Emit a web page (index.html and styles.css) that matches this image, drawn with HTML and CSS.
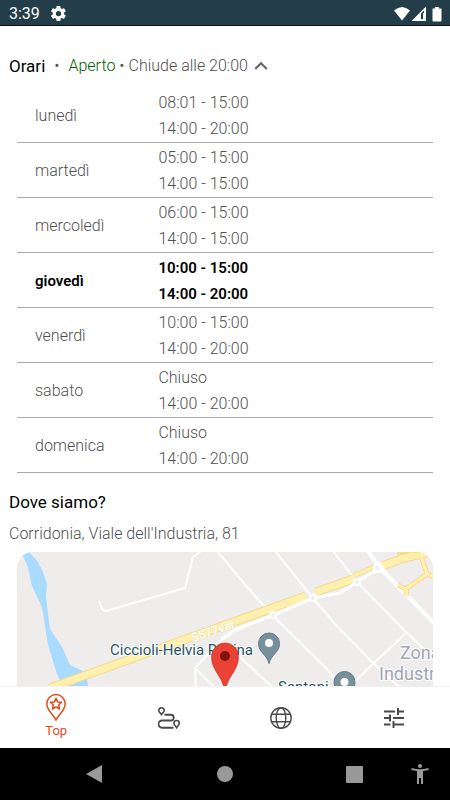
FILE: index.html
```html
<!DOCTYPE html>
<html lang="it">
<head>
<meta charset="utf-8">
<meta name="viewport" content="width=device-width, initial-scale=1">
<title>Orari e posizione</title>
<link rel="stylesheet" href="styles.css">
</head>
<body>
<header class="status">
  <span>3:39</span>
  <svg class="gear" width="15" height="15" viewBox="2 2 20 20"><path fill="#fff" fill-rule="evenodd" d="M19.4 13a7.500 7.500 0 0 0 0-2l2.100-1.600c.2-.2.2-.4.1-.6l-2-3.500c-.1-.2-.4-.3-.6-.2l-2.500 1a7.300 7.300 0 0 0-1.700-1l-.4-2.700a.5.5 0 0 0-.5-.4h-4a.5.5 0 0 0-.5.4L9 5.100a7.700 7.700 0 0 0-1.700 1l-2.500-1c-.2-.1-.5 0-.6.2l-2 3.500c-.1.2-.1.5.1.6L4.500 11a8 8 0 0 0 0 2l-2.200 1.600c-.2.2-.2.4-.1.6l2 3.500c.1.2.4.3.6.2l2.500-1c.5.4 1.100.7 1.700 1l.4 2.700c0 .2.2.4.5.4h4c.3 0 .5-.2.5-.4l.4-2.700a7.300 7.300 0 0 0 1.700-1l2.500 1c.2.1.5 0 .6-.2l2-3.500c.1-.2.1-.5-.1-.6zM12 15.500a3.500 3.500 0 1 1 0-7 3.500 3.500 0 0 1 0 7z"/></svg>
  <svg class="signals" width="50" height="16" viewBox="0 0 50 16"><path fill="#fff" d="M0 4.500Q8-2.500 16 4.500L8 14.500z"/><path fill="#fff" fill-rule="evenodd" d="M17.500 15L32 .5V15zM27 7.500V13h3V4.500z"/><path fill="#fff" d="M29 7h1v6h-1zM41 1h4v1.500h2q.5 0 .5.600V14.500q0 1-1 1h-7q-1 0-1-1V3.100q0-.6.5-.6h2z"/></svg>
</header>

<main class="content">
  <button class="summary" type="button" aria-expanded="true" aria-controls="hours">
    <span class="title">Orari</span>
    <span class="dot wide">•</span>
    <span class="open">Aperto</span>
    <span class="dot">•</span>
    <span>Chiude alle 20:00</span>
    <svg class="chevron" width="14" height="10" viewBox="0 0 14 10"><path d="M1.200 8L7 2.200 12.800 8" fill="none" stroke="#666" stroke-width="2.200"/></svg>
  </button>

  <table class="hours" id="hours">
    <tbody>
      <tr><th scope="row">lunedì</th><td>08:01 - 15:00<br>14:00 - 20:00</td></tr>
      <tr><th scope="row">martedì</th><td>05:00 - 15:00<br>14:00 - 15:00</td></tr>
      <tr><th scope="row">mercoledì</th><td>06:00 - 15:00<br>14:00 - 15:00</td></tr>
      <tr class="today"><th scope="row">giovedì</th><td>10:00 - 15:00<br>14:00 - 20:00</td></tr>
      <tr><th scope="row">venerdì</th><td>10:00 - 15:00<br>14:00 - 20:00</td></tr>
      <tr><th scope="row">sabato</th><td>Chiuso<br>14:00 - 20:00</td></tr>
      <tr><th scope="row">domenica</th><td>Chiuso<br>14:00 - 20:00</td></tr>
    </tbody>
  </table>

  <h2 class="title where">Dove siamo?</h2>
  <p class="address">Corridonia, Viale dell'Industria, 81</p>

  <div class="map">
    <svg viewBox="17 552 416 134" preserveAspectRatio="xMidYMin slice" role="img" aria-label="Mappa">
      <path fill="#eeedec" d="M17 552h416v134H17z"/>
      <path fill="#a9daff" d="M22 554l7-2 9 10 5 10 4 12-1 12 1 10 3 23 12 18 8 18 13 6 4 8 1 7H63l-6-12-9-29-6-38-10-21-4-19z"/>
      <g fill="none" stroke="#fff" stroke-linejoin="round">
        <path stroke-width="2" d="M99 601l3 8 4 2 79-23 8-31 8-6M217 551l31 37 18 20M275 551l37 46 23 27 37 38 27 25M333 551l24 31 48 49 21 20M273 616l52 51 18 20M405 634l-32 30-24 23M224 637l-29 31 1 19M195 668l19 19M238 655l34 32"/>
        <path stroke-width="4" d="M368 551l12 17 54 55"/>
      </g>
      <g fill="none" stroke="#f3d991" stroke-width="9">
        <path d="M50 688L225 625 306 596M316 592l37-13M382 566l22-8 31-7"/>
        <path stroke-width="5" d="M353 576l21-9M421 556l6 18 7 3M427 574l-10 7-11 8-8-4M406 588l1 8M397 552h21"/>
      </g>
      <g fill="none" stroke="#fff0ad" stroke-width="7">
        <path d="M50 688L225 625 306 596M316 592l37-13M382 566l22-8 31-7"/>
        <path stroke-width="3" d="M353 576l21-9M421 556l6 18 7 3M427 574l-10 7-11 8-8-4M406 588l1 8"/>
        <path stroke="#ffe16a" stroke-width="2" d="M397 552h21"/>
      </g>
      <g fill="none" stroke="#fff" stroke-width="3" stroke-linejoin="round">
        <path d="M222 639l13-9 38-15 40-17 27-5 17-11 16-10 8-2M368 551l8 12-2 9 10-2-5-8"/>
        <g fill="#eeedec" stroke-width="2"><circle cx="273" cy="615" r="3"/><circle cx="313" cy="598" r="3"/><circle cx="357" cy="582" r="3"/><circle cx="377" cy="568" r="3"/></g>
      </g>
      <text class="road" transform="translate(193 642) rotate(-19)">SS77var</text>
      <text class="place" x="110" y="655">Ciccioli-Helvia Recina</text>
      <text class="place" x="278" y="692">Santoni</text>
      <text class="area" x="400" y="659">Zona</text>
      <text class="area" x="379" y="680">Industri</text>
      <g fill="#78909c" stroke="#607985"><path d="M269 663.500c-2-9-10.500-11-10.500-20a10.500 10.500 0 0 1 21 0c0 9-8.500 11-10.500 20z"/><path d="M344.500 702c-2-9-10.500-11-10.500-20a10.500 10.500 0 0 1 21 0c0 9-8.500 11-10.500 20z"/></g>
      <g fill="#fff"><circle cx="269" cy="643" r="4"/><circle cx="344.500" cy="682" r="4"/></g>
      <path fill="#ea4335" stroke="#c5221f" stroke-width=".6" d="M225 694c-1-18-13.500-22-13.500-37.500a13.500 13.500 0 0 1 27 0C238.500 672 226 676 225 694z"/>
      <circle cx="225" cy="656" r="5" fill="#811411"/>
    </svg>
  </div>
</main>

<nav class="tabs" aria-label="Sezioni">
  <a class="tab active" href="#top">
    <svg width="20" height="27" viewBox="0 0 20 27" fill="none" stroke="currentColor"><path stroke-width="1.500" d="M10 26C7 20 .8 16.500.8 9.800a9.200 9.200 0 0 1 18.400 0C19.200 16.500 13 20 10 26z"/><path stroke-width="1.500" stroke-linejoin="round" d="M10 4.200l1.600 3.700 4 .4-3 2.700.9 4-3.500-2.100L6.500 15l.9-4-3-2.700 4-.4z"/></svg>
    <span>Top</span>
  </a>
  <a class="tab" href="#percorsi" aria-label="Percorsi">
    <svg width="22" height="22" viewBox="0 0 22 22" fill="none" stroke="currentColor"><path stroke-width="1.600" d="M3.500 7.500C2.500 6 .8 5.300.8 3.500a2.700 2.700 0 0 1 5.400 0C6.200 5.300 4.500 6 3.500 7.500zM18.600 20.700c-1-2-2.700-2.700-2.700-4.500a2.700 2.700 0 0 1 5.400 0c0 1.800-1.700 2.500-2.700 4.500z"/><path stroke-width="1.900" d="M6.500 7.700H13q2.700 0 2.700 2.900T13 13.500H4a3.600 3.600 0 0 0 0 7.200h11.500"/></svg>
  </a>
  <a class="tab" href="#web" aria-label="Sito web">
    <svg width="22" height="22" viewBox="0 0 22 22" fill="none" stroke="currentColor" stroke-width="1.400"><circle cx="11" cy="11" r="10.200"/><ellipse cx="11" cy="11" rx="4.800" ry="10.200"/><path d="M1.700 7.300h18.600M1.700 14.700h18.600"/></svg>
  </a>
  <a class="tab" href="#filtri" aria-label="Filtri">
    <svg width="20" height="20" viewBox="0 0 20 20" fill="none" stroke="currentColor" stroke-width="2"><path d="M0 3.500h11M14 3.500h6M14 0v7M0 10h6M9 10h11M6 6.500v7M0 16.500h6.500M9.500 16.500H20M9.500 13v7"/></svg>
  </a>
</nav>

<footer class="system">
  <button type="button" aria-label="Indietro"><svg width="18" height="18" viewBox="0 0 18 18"><path d="M1 9L17 0v18z"/></svg></button>
  <button type="button" aria-label="Home"><svg width="18" height="18" viewBox="0 0 18 18"><circle cx="9" cy="9" r="8"/></svg></button>
  <button type="button" aria-label="Recenti"><svg width="18" height="18" viewBox="0 0 18 18"><rect x="1" y="1" width="17" height="17" rx="1"/></svg></button>
  <button type="button" aria-label="Accessibilità"><svg width="18" height="20" viewBox="0 0 18 20"><circle cx="9" cy="2" r="2"/><path d="M.5 4Q9 6.500 17.500 4v2L12 7v13h-2v-6H8v6H6V7L.5 6z"/></svg></button>
</footer>
</body>
</html>
```

FILE: styles.css
```css
* { box-sizing: border-box; }

body {
  margin: 0;
  height: 100vh;
  display: flex;
  flex-direction: column;
  background: #fff;
  color: #505050;
  font: 300 16px/26px Roboto, sans-serif;
}

button {
  border: 0;
  padding: 0;
  background: none;
  color: inherit;
  font: inherit;
}

svg { display: block; }

.status {
  flex: none;
  height: 26px;
  display: flex;
  align-items: center;
  padding: 2px 6px 0 9px;
  border-bottom: 1px solid #0c1114;
  background: #233d49;
  color: #fff;
  font-size: 16px;
  font-weight: 400;
}

.gear { margin-left: 11px; }
.signals { margin-left: auto; }

.content {
  flex: 1;
  min-height: 0;
  overflow: hidden;
  padding-top: 27px;
  display: flex;
  flex-direction: column;
}

.summary {
  flex: none;
  display: flex;
  align-items: center;
  margin: 0 9px;
  padding-bottom: 9px;
  gap: 4px;
}

.title {
  color: #000;
  font-size: 17px;
  font-weight: 400;
}

.open { color: #005c00; }

.dot { font-size: 16px; }
.wide { margin: 0 5px; }
.chevron { margin-left: 2px; }

.hours {
  flex: none;
  margin: 0 17px;
  border-collapse: separate;
  border-spacing: 0;
}

.hours th,
.hours td {
  padding: 2px 0 0;
  border-bottom: 1px solid #aaa;
  text-align: left;
  font-weight: inherit;
}

.hours th {
  width: 34%;
  padding-left: 18px;
}

.today {
  color: #000;
  font-size: 15px;
  font-weight: 600;
}

.where {
  margin: 16px 9px 0;
}

.address {
  margin: 6px 9px 5px;
}

.map {
  flex: 1;
  min-height: 0;
  margin: 0 17px;
  overflow: hidden;
  border-radius: 16px 16px 0 0;
}

.map svg {
  width: 100%;
  height: 100%;
}

.road,
.place,
.area {
  stroke: #fff;
  stroke-width: 2px;
  paint-order: stroke;
  font-weight: 400;
}

.road {
  fill: #fff;
  stroke: #efdf9e;
  stroke-width: 1px;
  font-size: 12px;
  font-weight: 600;
}

.place {
  fill: #265365;
  font-size: 15px;
}

.area {
  fill: #9ea5b2;
  font-size: 18px;
}

.tabs {
  flex: none;
  height: 62px;
  display: grid;
  grid-template-columns: repeat(4, 1fr);
  border-top: 1px solid #f1f1f1;
  background: #fff;
}

.tab {
  display: flex;
  flex-direction: column;
  align-items: center;
  justify-content: center;
  color: #4a4a4a;
  font-size: 13px;
  font-weight: 400;
  line-height: 20px;
  text-decoration: none;
}

.active { color: #e64a19; }

.system {
  flex: none;
  height: 52px;
  display: grid;
  grid-template-columns: 131fr 130fr 66fr 18px;
  align-items: center;
  padding: 0 21px 0 85px;
  background: #000;
  fill: #999;
}
```
